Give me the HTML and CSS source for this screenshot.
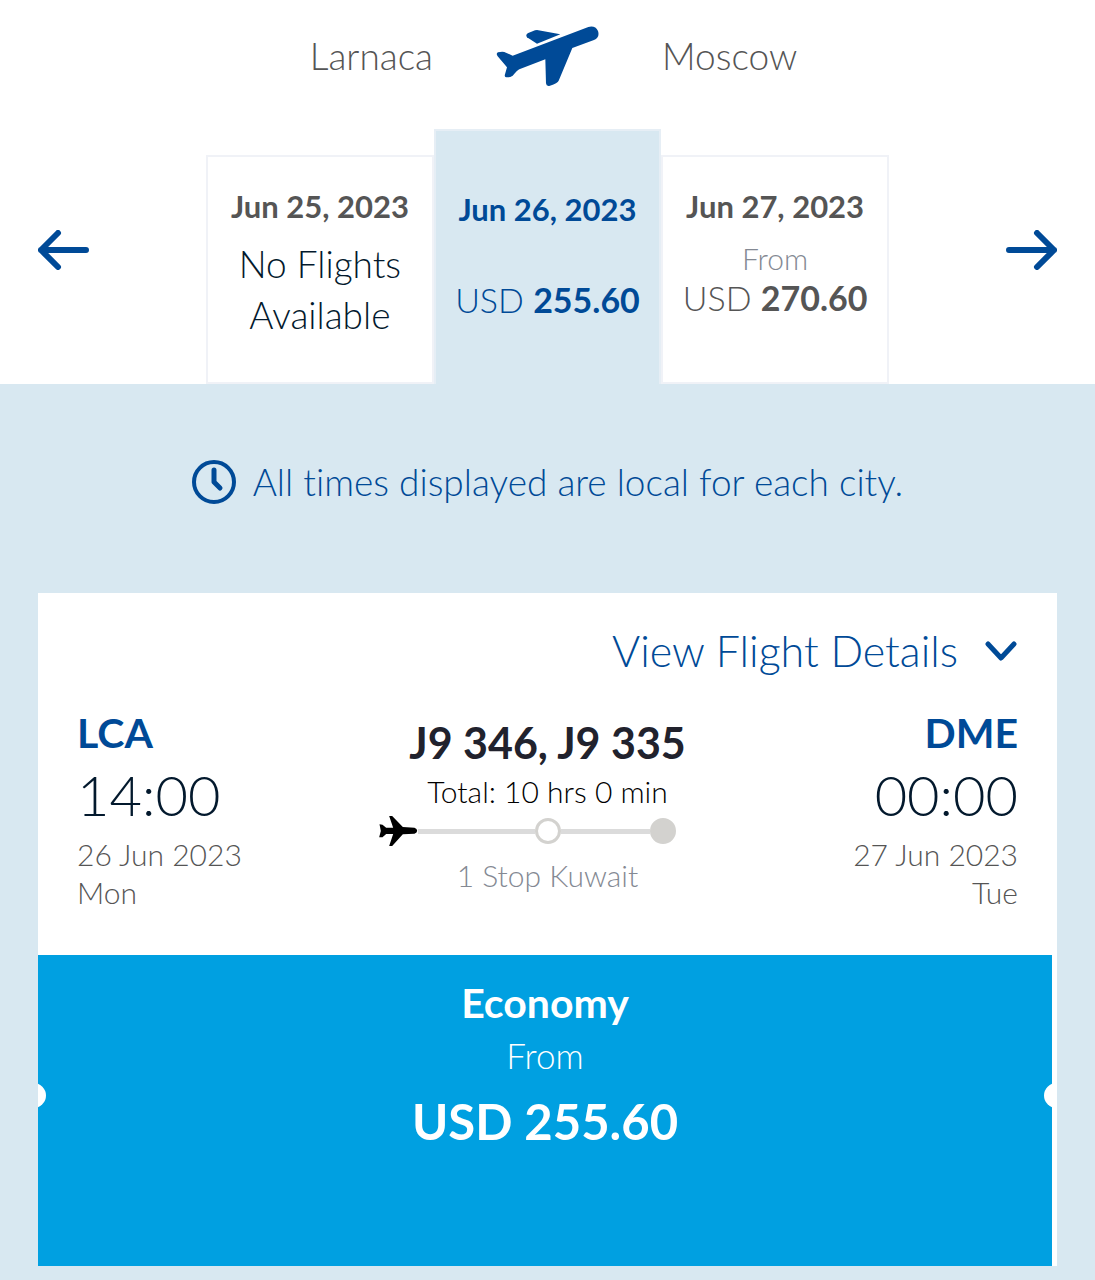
FILE: index.html
```html
<!DOCTYPE html>
<html lang="en">
<head>
    <meta charset="UTF-8">
    <meta name="viewport" content="width=device-width, initial-scale=1.0">
    <title>Select Flight</title>
    <link rel="stylesheet" href="styles.css">
</head>
<body>
    <header class="route">
        <span class="city origin">Larnaca</span>
        <svg class="takeoff" viewBox="615 45 315 186" aria-hidden="true">
            <path d="M668 137L895 51Q916 46 924 63Q930 82 912 90L847 114L806 212Q803 219 780 227Q769 230 768 220L766 148L688 178Q682 181 668 197Q657 204 646 201Q643 198 645 193L651 172L623 139Q617 130 624 127Q640 123 648 128Z"/>
            <path d="M741 60L811 73L741 101L711 82Q706 75 713 70L735 61Q738 60 741 60Z"/>
        </svg>
        <span class="city">Moscow</span>
    </header>

    <nav class="dates">
        <button class="arrow" aria-label="Previous dates">
            <svg viewBox="0 0 51 40"><path d="M20 3L3 20L20 37M3 20H48"/></svg>
        </button>
        <div class="tabs">
            <button class="tab">
                <span class="day">Jun 25, 2023</span>
                <span class="none"><span>No Flights</span> <span>Available</span></span>
            </button>
            <button class="tab active">
                <span class="day">Jun 26, 2023</span>
                <span class="fare">USD <b>255.60</b></span>
            </button>
            <button class="tab">
                <span class="day">Jun 27, 2023</span>
                <span class="from">From</span>
                <span class="fare">USD <b>270.60</b></span>
            </button>
        </div>
        <button class="arrow" aria-label="Next dates">
            <svg viewBox="0 0 51 40"><path d="M31 3L48 20L31 37M48 20H3"/></svg>
        </button>
    </nav>

    <main class="results">
        <p class="notice">
            <svg class="clock" viewBox="0 0 44 44" aria-hidden="true">
                <circle cx="22" cy="22" r="20"/>
                <path d="M22 10V22L28 28"/>
            </svg>
            <span>All times displayed are local for each city.</span>
        </p>

        <section class="card">
            <button class="details">
                View Flight Details
                <svg viewBox="0 0 32 20" aria-hidden="true"><path d="M3 3L16 17L29 3"/></svg>
            </button>

            <div class="flight">
                <div class="stop">
                    <h2 class="code">LCA</h2>
                    <p class="time">14:00</p>
                    <p class="date">26 Jun 2023</p>
                    <p class="date">Mon</p>
                </div>
                <div class="summary">
                    <h3 class="number">J9 346, J9 335</h3>
                    <p class="total">Total: 10 hrs 0 min</p>
                    <div class="track">
                        <svg class="plane" viewBox="27 320 119 96" aria-hidden="true">
                            <path d="M31 348L40 349L51 358H72L60 323H69L101 356L136 358Q144 361 144 367Q144 373 136 376L101 378L69 413H60L72 377H51L40 387H30L35 368Z"/>
                        </svg>
                        <span class="line first"></span>
                        <span class="dot"></span>
                        <span class="line"></span>
                        <span class="dot end"></span>
                    </div>
                    <p class="via">1 Stop Kuwait</p>
                </div>
                <div class="stop right">
                    <h2 class="code">DME</h2>
                    <p class="time">00:00</p>
                    <p class="date">27 Jun 2023</p>
                    <p class="date">Tue</p>
                </div>
            </div>

            <button class="economy">
                <span class="cabin">Economy</span>
                <span class="cabin-from">From</span>
                <span class="price">USD 255.60</span>
            </button>
        </section>
    </main>
</body>
</html>
```

FILE: styles.css
```css
* {
    box-sizing: border-box;
}
body {
    margin: 0;
    font-family: Lato, "Open Sans", sans-serif;
    font-weight: 300;
    font-variant-ligatures: none;
    color: #03192d;
    background-color: white;
}
h2, h3, p {
    margin: 0;
}
button {
    font: inherit;
    font-variant-ligatures: none;
    color: inherit;
    background: none;
    border: none;
    padding: 0;
    cursor: pointer;
}
svg {
    display: block;
    flex: none;
}

/* route */
.route {
    display: grid;
    grid-template-columns: 1fr auto 1fr;
    align-items: center;
    gap: 62px;
    padding-top: 24px;
    color: #555;
    font-size: 37px;
    line-height: 60px;
}
.origin {
    text-align: right;
}
.takeoff {
    width: 105px;
    height: 64px;
    fill: #004a97;
}

/* date picker */
.dates {
    display: flex;
    justify-content: space-between;
    align-items: center;
    padding: 41px 38px 0;
}
.arrow {
    padding-bottom: 14px;
}
.arrow svg {
    width: 51px;
    height: 40px;
}
.arrow path, .clock, .details path {
    fill: none;
    stroke: #004a97;
    stroke-width: 6;
    stroke-linecap: round;
    stroke-linejoin: round;
}
.tabs {
    display: grid;
    grid-template-columns: repeat(3, 1fr);
    align-items: end;
    width: 67%;
}
.tab {
    display: flex;
    flex-direction: column;
    align-items: center;
    min-height: 229px;
    padding-top: 29px;
    border: 2px solid #f0f2f7;
    color: #555;
    white-space: nowrap;
}
.tab.active {
    min-height: 255px;
    padding-top: 58px;
    background-color: #d8e8f1;
    border-color: #e6eef5;
    border-bottom: none;
    color: #004a97;
}
.day {
    font-size: 31px;
    font-weight: 700;
    line-height: 40px;
}
.none {
    display: flex;
    flex-direction: column;
    align-items: center;
    padding-top: 12px;
    color: #03192d;
    font-size: 37px;
    line-height: 51px;
}
.from {
    padding-top: 12px;
    color: #848993;
    font-size: 30px;
    line-height: 40px;
}
.fare {
    font-size: 34px;
    line-height: 40px;
}
.active .fare {
    padding-top: 51px;
}
b {
    font-weight: 700;
}

/* results */
.results {
    padding: 72px 38px 14px;
    background-color: #d8e8f1;
}
.notice {
    display: flex;
    justify-content: center;
    align-items: center;
    gap: 17px;
    padding-bottom: 85px;
    color: #004a97;
    font-size: 37px;
    line-height: 52px;
}
.clock {
    width: 44px;
    height: 44px;
    stroke-width: 4;
}
.clock path {
    stroke-width: 5;
}
.card {
    background-color: white;
}
.details {
    display: flex;
    align-items: center;
    gap: 27px;
    margin-left: auto;
    padding: 30px 40px 28px 0;
    color: #004a97;
    font-size: 43px;
    line-height: 56px;
}
.details svg {
    width: 32px;
    height: 20px;
}
.details path {
    stroke-width: 5;
}
.flight {
    display: flex;
    justify-content: space-between;
    padding: 0 39px 44px;
}
.stop {
    flex: 1;
}
.right {
    text-align: right;
}
.code {
    color: #004a97;
    font-size: 41px;
    line-height: 52px;
}
.time {
    padding-bottom: 4px;
    font-size: 56px;
    line-height: 72px;
}
.date {
    color: #555;
    font-size: 30px;
    line-height: 38px;
}
.summary {
    width: 340px;
    padding-top: 8px;
    text-align: center;
    white-space: nowrap;
}
.number {
    color: #21222d;
    font-size: 43px;
    line-height: 56px;
}
.total {
    color: black;
    font-size: 30px;
    line-height: 40px;
}
.track {
    display: flex;
    align-items: center;
    height: 40px;
    margin-right: 42px;
}
.plane {
    width: 40px;
    height: 32px;
}
.line {
    flex: 3;
    height: 5px;
    background-color: #dbdbdb;
}
.line.first {
    flex: 4;
}
.dot {
    width: 26px;
    height: 26px;
    border: 3px solid #d3d2cf;
    border-radius: 50%;
}
.dot.end {
    background-color: #d3d2cf;
}
.via {
    color: #848993;
    font-size: 30px;
    line-height: 48px;
}

/* fare button, with a ticket notch on both sides */
.economy {
    position: relative;
    display: flex;
    flex-direction: column;
    align-items: center;
    width: calc(100% - 5px);
    min-height: 311px;
    padding-top: 20px;
    overflow: hidden;
    background-color: #00a0e1;
    color: white;
}
.economy::before, .economy::after {
    content: "";
    position: absolute;
    top: 128px;
    left: -17px;
    width: 25px;
    height: 25px;
    border-radius: 50%;
    background-color: white;
}
.economy::after {
    left: auto;
    right: -17px;
}
.cabin {
    font-size: 41px;
    font-weight: 700;
    line-height: 56px;
}
.cabin-from {
    font-size: 35px;
    line-height: 48px;
}
.price {
    padding-top: 10px;
    font-size: 49px;
    font-weight: 700;
    line-height: 64px;
}
```
